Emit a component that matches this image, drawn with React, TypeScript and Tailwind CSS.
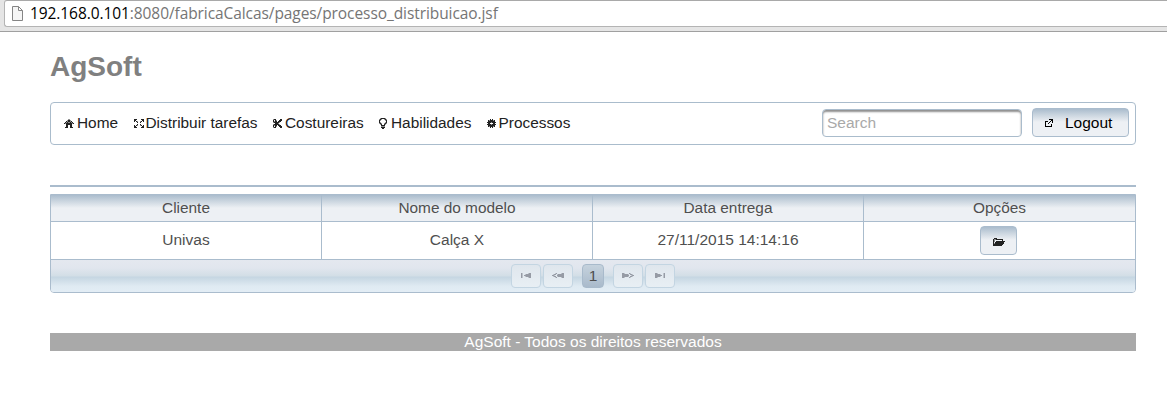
import React from "react";

type IconProps = { rows: string[]; className?: string };

function PixelIcon({ rows, className = "" }: IconProps) {
  return (
    <svg
      width={rows[0].length}
      height={rows.length}
      viewBox={`0 0 ${rows[0].length} ${rows.length}`}
      shapeRendering="crispEdges"
      className={`block shrink-0 ${className}`}
      aria-hidden="true"
    >
      {rows.flatMap((row, y) =>
        row.split("").map((c, x) =>
          c === "." ? null : (
            <rect key={`${x}-${y}`} x={x} y={y} width="1" height="1" fill="currentColor" opacity={c === "#" ? 1 : 0.5} />
          )
        )
      )}
    </svg>
  );
}

const home = ["....oo....", "...o##o...", "..#o##o#..", ".#o#oo#o#.", "#o######o#", "..######..", "..##..##..", "..##..##..", ".###..###."];
const expand = ["###....###", "##......##", "#.#o..o#.#", "...#..#...", "..........", "...#..#...", "#.#o..o#.#", "##......##", "###....###"];
const scissors = ["o##....##", "#.#o..###", "#o##.###.", "o#####o..", "..###o...", "o#####o..", "#o##.###.", "#.#o..###", "o##....##"];
const bulb = [".o####o.", "o#o..o#o", "#o....o#", "#......#", "#o....o#", "o#o..o#o", ".o#..#o.", "..####..", "..oooo..", "..####..", "...##..."];
const gear = ["...#.#...", ".#o###o#.", ".#######.", "####o####", ".##...##.", "####o####", ".#######.", ".#o###o#.", "...#.#..."];
const external = ["....####", "......##", "###..#.#", "#...#..#", "#..#....", "#.....#.", "#.....#.", "#######."];
const folder = [".###........", "#oo#######..", "#o.......#..", "#o.#########", "#.#########.", "#o#########.", "##########..", "#########..."];
const first = ["#o.....o##", "#o..o#####", "#o.#######", "#o..o#####", "#o.....o##"];
const previous = ["...o#....o##", ".o##.o######", "##o..#######", ".o##.o######", "...o#....o##"];
const flip = (rows: string[]) => rows.map((r) => r.split("").reverse().join(""));

const menu = [
  { label: "Home", rows: home, item: "w-[70px]", slot: "w-[13px]" },
  { label: "Distribuir tarefas", rows: expand, item: "w-[139px]", slot: "w-[11.5px]" },
  { label: "Costureiras", rows: scissors, item: "w-[106px]", slot: "w-[12px]" },
  { label: "Habilidades", rows: bulb, item: "w-[108px]", slot: "w-[12px]" },
  { label: "Processos", rows: gear, item: "w-[100px]", slot: "w-[11.5px]" },
];

function PageButton({ rows, label }: { rows: string[]; label: string }) {
  return (
    <button aria-label={label} className="flex h-6 w-[30px] items-center justify-center rounded-[4px] border border-[#c3d5e2] bg-linear-to-b from-[#dfe6ed] to-[#e8eff4] pb-px text-[#969ba5]">
      <PixelIcon rows={rows} />
    </button>
  );
}

const metal = "bg-[linear-gradient(#aabccd_0px,#c5d1dc_5px,#edf0f4_13px,#edf0f4_100%)]";

export default function App() {
  return (
    <div className="h-[416px] bg-white font-['Liberation_Sans',Arial,sans-serif] text-[15.5px] leading-[18px]">
      <header className="h-8 overflow-hidden border-b border-[#a0a0a0] bg-[#e5e5e5] pl-1">
        <div className="flex h-[27px] items-center rounded-l-[3px] border border-r-0 border-[#b4b4b4] border-t-[#a9a9a9] bg-white pl-[7px]">
          <svg width="11" height="15" viewBox="0 0 11 15" className="block shrink-0" fill="none" stroke="#858585">
            <path d="M.5 .5h6l4 4v10H.5zM6.500 .5v4h4" fill="#f5f5f5" />
          </svg>
          <span className="ml-[7px] whitespace-nowrap pb-0.5 font-['Open_Sans','Noto_Sans',sans-serif] text-[15.5px] leading-5 tracking-[-0.08px] text-[#757575]">
            <span className="text-black">192.168.0.101</span>:8080/fabricaCalcas/pages/processo_distribuicao.jsf
          </span>
        </div>
      </header>

      <main className="ml-[50px] w-[1086px]">
        <h1 className="pt-[19px] text-[28px] leading-8 font-bold text-[#808080]">AgSoft</h1>

        <nav className="mt-[19px] flex h-[43px] items-center rounded-[4px] border border-[#aabccc] pb-0.5 pl-[13px] pr-1.5 text-[15.4px] text-[#222]">
          {menu.map((m) => (
            <a key={m.label} className={`flex shrink-0 items-center whitespace-nowrap ${m.item}`}>
              <span className={`flex shrink-0 pt-0.5 ${m.slot}`}><PixelIcon rows={m.rows} /></span>
              {m.label}
            </a>
          ))}
          <input
            placeholder="Search"
            className="ml-auto h-7 w-[200px] rounded-[4px] border border-[#aabccc] bg-white px-1 text-[15.5px] shadow-[inset_0_2px_2px_#8f8f8f] outline-none placeholder:text-[#a9a9a9]"
          />
          <button className={`ml-2.5 flex h-[29px] w-[97px] items-center rounded-[4px] border border-[#aabccd] pl-3 text-[15.5px] text-black ${metal}`}>
            <PixelIcon rows={external} />
            <span className="ml-3">Logout</span>
          </button>
        </nav>

        <hr className="mt-10 border-t-2 border-[#aabccd]" />

        <section className="mt-[7px] h-[99px] overflow-hidden rounded-b-[4px] border border-[#aabccd] text-[#4f4f4f]">
          <div className={`grid h-[27px] grid-cols-[271px_271px_271px_1fr] border-b border-[#aabccd] text-center text-[15.4px] leading-[25px] ${metal}`}>
            <div className="border-r border-[#aabccd]">Cliente</div>
            <div className="border-r border-[#aabccd]">Nome do modelo</div>
            <div className="border-r border-[#aabccd]">Data entrega</div>
            <div>Opções</div>
          </div>
          <div className="grid h-[38px] grid-cols-[271px_271px_271px_1fr] border-b border-[#aabccd] text-center leading-[36px]">
            <div className="border-r border-[#aabccd]">Univas</div>
            <div className="border-r border-[#aabccd]">Calça X</div>
            <div className="border-r border-[#aabccd]">27/11/2015 14:14:16</div>
            <div className="flex items-center justify-center pr-0.5">
              <button aria-label="Abrir" className={`flex h-[29px] w-[37px] items-center justify-center rounded-[4px] border border-[#aabccd] pt-0.5 text-[#222] ${metal}`}>
                <PixelIcon rows={folder} />
              </button>
            </div>
          </div>
          <div className="flex h-8 items-center justify-center bg-[linear-gradient(#e4e8ef_0px,#e1e6ee_8px,#d2dee6_16px,#c5d6e2_17px,#dfeaf2_26px,#e3edf5_100%)]">
            <PageButton rows={first} label="Primeira" />
            <span className="w-0.5" />
            <PageButton rows={previous} label="Anterior" />
            <span className="mx-[9px] flex h-6 w-[22px] items-center justify-center rounded-[4px] border border-[#a8bacb] bg-linear-to-b from-[#c5d2dd] to-[#a9bacb]">1</span>
            <PageButton rows={flip(previous)} label="Próxima" />
            <span className="w-0.5" />
            <PageButton rows={flip(first)} label="Última" />
          </div>
        </section>

        <footer className="mt-10 h-[18px] bg-[#a9a9a9] text-center text-white">AgSoft - Todos os direitos reservados</footer>
      </main>
    </div>
  );
}
